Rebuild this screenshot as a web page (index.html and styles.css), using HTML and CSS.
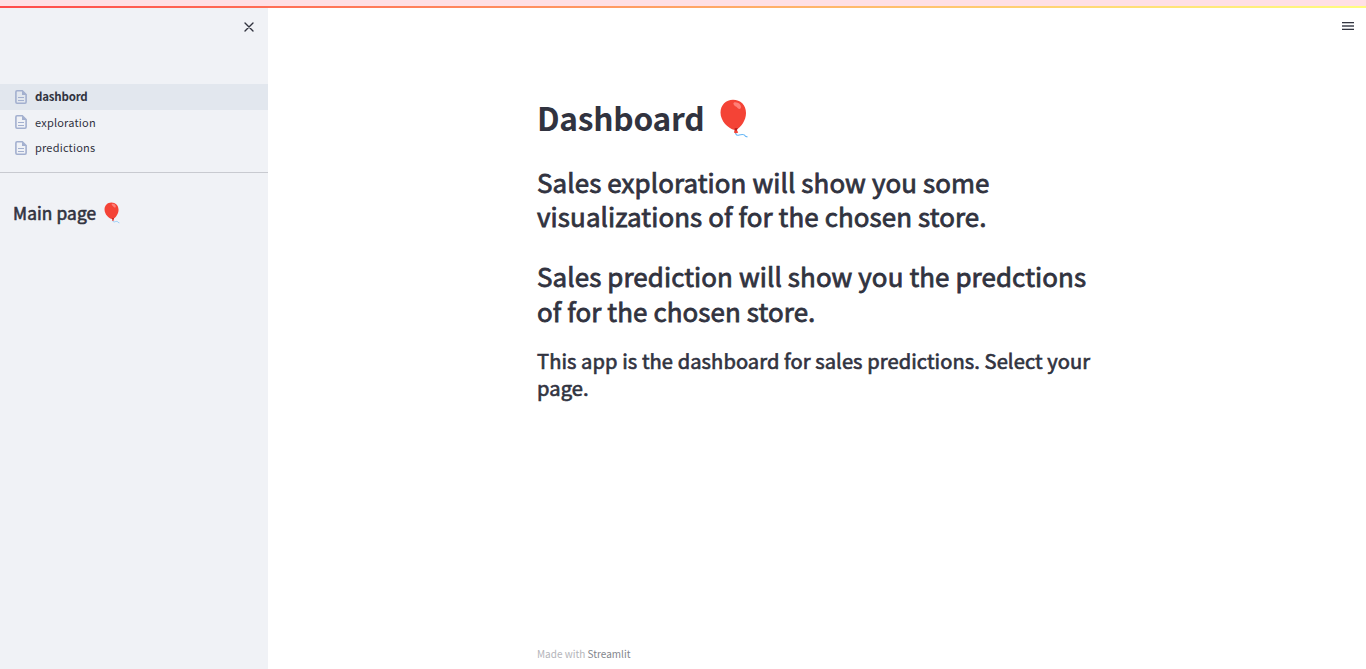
FILE: index.html
```html
<!DOCTYPE html>
<html lang="en">
<head>
<meta charset="utf-8">
<title>dashbord</title>
<link rel="stylesheet" href="styles.css">
</head>
<body>
<svg class="defs" width="0" height="0">
  <symbol id="balloon" viewBox="0 0 30 40">
    <path d="M15.3 30.5 C15 34 16 36.8 18.5 36.2 C21.5 35.3 24 34.3 25.5 37.2 L27.5 38" fill="none" stroke="#64b5f6" stroke-width="1.1"/>
    <path d="M13 0.8 C20.5 0.8 26 6 26 14 C26 21.5 21 28 16.6 30.5 L18.2 33.4 C17 34.4 15 34.4 14 33.6 L14.6 31 C8 29.5 0.5 22 0.5 13.5 C0.5 6 6 0.8 13 0.8 Z" fill="#f44336"/>
    <path d="M14.6 29.3 L17.8 29 L16.8 31.5 L15 31.5 Z" fill="#b71c1c"/>
    <path d="M14 3.4 C18 2.6 22 6 20.8 9 C19.5 11.5 17.8 9 16 7.5 C14 6.4 12.6 4.5 14 3.4 Z" fill="#ff7f77"/>
  </symbol>
  <symbol id="page" viewBox="0 0 12 14">
    <path d="M2 .8 H7.3 L11.1 4.6 V12 Q11.1 13.2 10 13.2 H2 Q.9 13.2 .9 12 V2 Q.9 .8 2 .8 Z" fill="none" stroke="#a3b0cf" stroke-width="1.6"/>
    <path d="M7 1 V5 H11 Z" fill="#a3b0cf"/>
    <path d="M3 7.5 H9 M3 10.5 H9" stroke="#a3b0cf" stroke-width="1.1"/>
  </symbol>
</svg>
<div class="ribbon"></div>
<div class="app">
  <aside class="sidebar">
    <div class="sidebar-top">
      <svg class="close" viewBox="0 0 10 10"><path d="M1 1 L9 9 M9 1 L1 9" stroke="#31333f" stroke-width="1.35" stroke-linecap="round"/></svg>
    </div>
    <nav class="nav">
      <a class="nav-item active"><svg class="page"><use href="#page"/></svg><span>dashbord</span></a>
      <a class="nav-item"><svg class="page"><use href="#page"/></svg><span>exploration</span></a>
      <a class="nav-item"><svg class="page"><use href="#page"/></svg><span>predictions</span></a>
    </nav>
    <h2 class="side-title"><span>Main page</span><svg class="balloon-small"><use href="#balloon"/></svg></h2>
  </aside>
  <main class="main">
    <header class="toolbar">
      <svg class="menu" viewBox="0 0 12 8" shape-rendering="crispEdges"><path fill="#31333f" d="M0 0h12v1H0z M0 7h12v1H0z"/><path fill="#6f717a" d="M0 3h12v2H0z"/><path fill="#c3c4c8" d="M0 1h12v1H0z M0 6h12v1H0z"/></svg>
    </header>
    <div class="content">
      <h1 class="title"><span>Dashboard</span><svg class="balloon"><use href="#balloon"/></svg></h1>
      <h2 class="lead">Sales exploration will show you some<br>visualizations of for the chosen store.</h2>
      <h2 class="lead second">Sales prediction will show you the predctions<br>of for the chosen store.</h2>
      <h3 class="note">This app is the dashboard for sales predictions. Select your<br>page.</h3>
    </div>
    <footer class="footer">Made with <a>Streamlit</a></footer>
  </main>
</div>
</body>
</html>
```
FILE: styles.css
```css
* { box-sizing: border-box; }
body {
  margin: 0;
  height: 669px;
  overflow: hidden;
  display: flex;
  flex-direction: column;
  background: #fff;
  color: #31333f;
  font-family: "Source Sans Pro", "Noto Sans CJK SC", sans-serif;
}
h1, h2, h3 { margin: 0; font-weight: 400; }
.defs { display: none; }
.ribbon {
  height: 8px;
  flex: none;
  background: linear-gradient(90deg, #ff4b4b, #fffd80) 0 6px / 100% 2px no-repeat #ffe0e5;
}
.app { display: flex; flex: 1; }
.sidebar { width: 268px; background: #f0f2f6; }
.sidebar-top { height: 76px; padding: 14px 14px 0; display: flex; justify-content: flex-end; align-items: flex-start; }
.close { width: 10px; height: 10px; }
.nav { height: 89px; border-bottom: 1px solid #c8cad0; }
.nav-item {
  display: flex;
  align-items: center;
  height: 25.6px;
  padding-left: 15px;
  gap: 8px;
  font-size: 11px;
  letter-spacing: 0.2px;
  line-height: 25px;
}
.nav-item.active { background: #e2e7ee; font-size: 11.5px; letter-spacing: -0.2px; font-weight: 700; }
.page { width: 12px; height: 14px; }
.side-title { display: flex; padding: 28px 13px 0; gap: 8px; font-size: 17.3px; letter-spacing: 0.12px; line-height: 23px; -webkit-text-stroke: 0.6px #31333f; }
.balloon-small { width: 17px; height: 22px; margin-top: 1px; }
.main { flex: 1; display: flex; flex-direction: column; }
.toolbar { height: 76px; padding: 14px 12px 0; display: flex; justify-content: flex-end; align-items: flex-start; }
.menu { width: 12px; height: 8px; }
.content { flex: 1; padding: 12px 0 0 269px; white-space: nowrap; }
.title { display: flex; height: 42px; gap: 16px; font-size: 31.7px; letter-spacing: -0.25px; line-height: 42px; font-weight: 700; }
.balloon { width: 30px; height: 40px; margin-top: 3px; }
.lead { margin-top: 27px; font-size: 25.9px; letter-spacing: 0.11px; line-height: 34px; -webkit-text-stroke: 0.8px #31333f; }
.lead.second { margin-top: 25px; line-height: 35px; }
.note { margin-top: 19px; font-size: 20.1px; letter-spacing: 0.09px; line-height: 27px; -webkit-text-stroke: 0.65px #31333f; }
.footer { height: 24px; padding-left: 269px; font-size: 10px; line-height: 18px; color: #b4b5ba; }
.footer a { color: #83858c; }
```
